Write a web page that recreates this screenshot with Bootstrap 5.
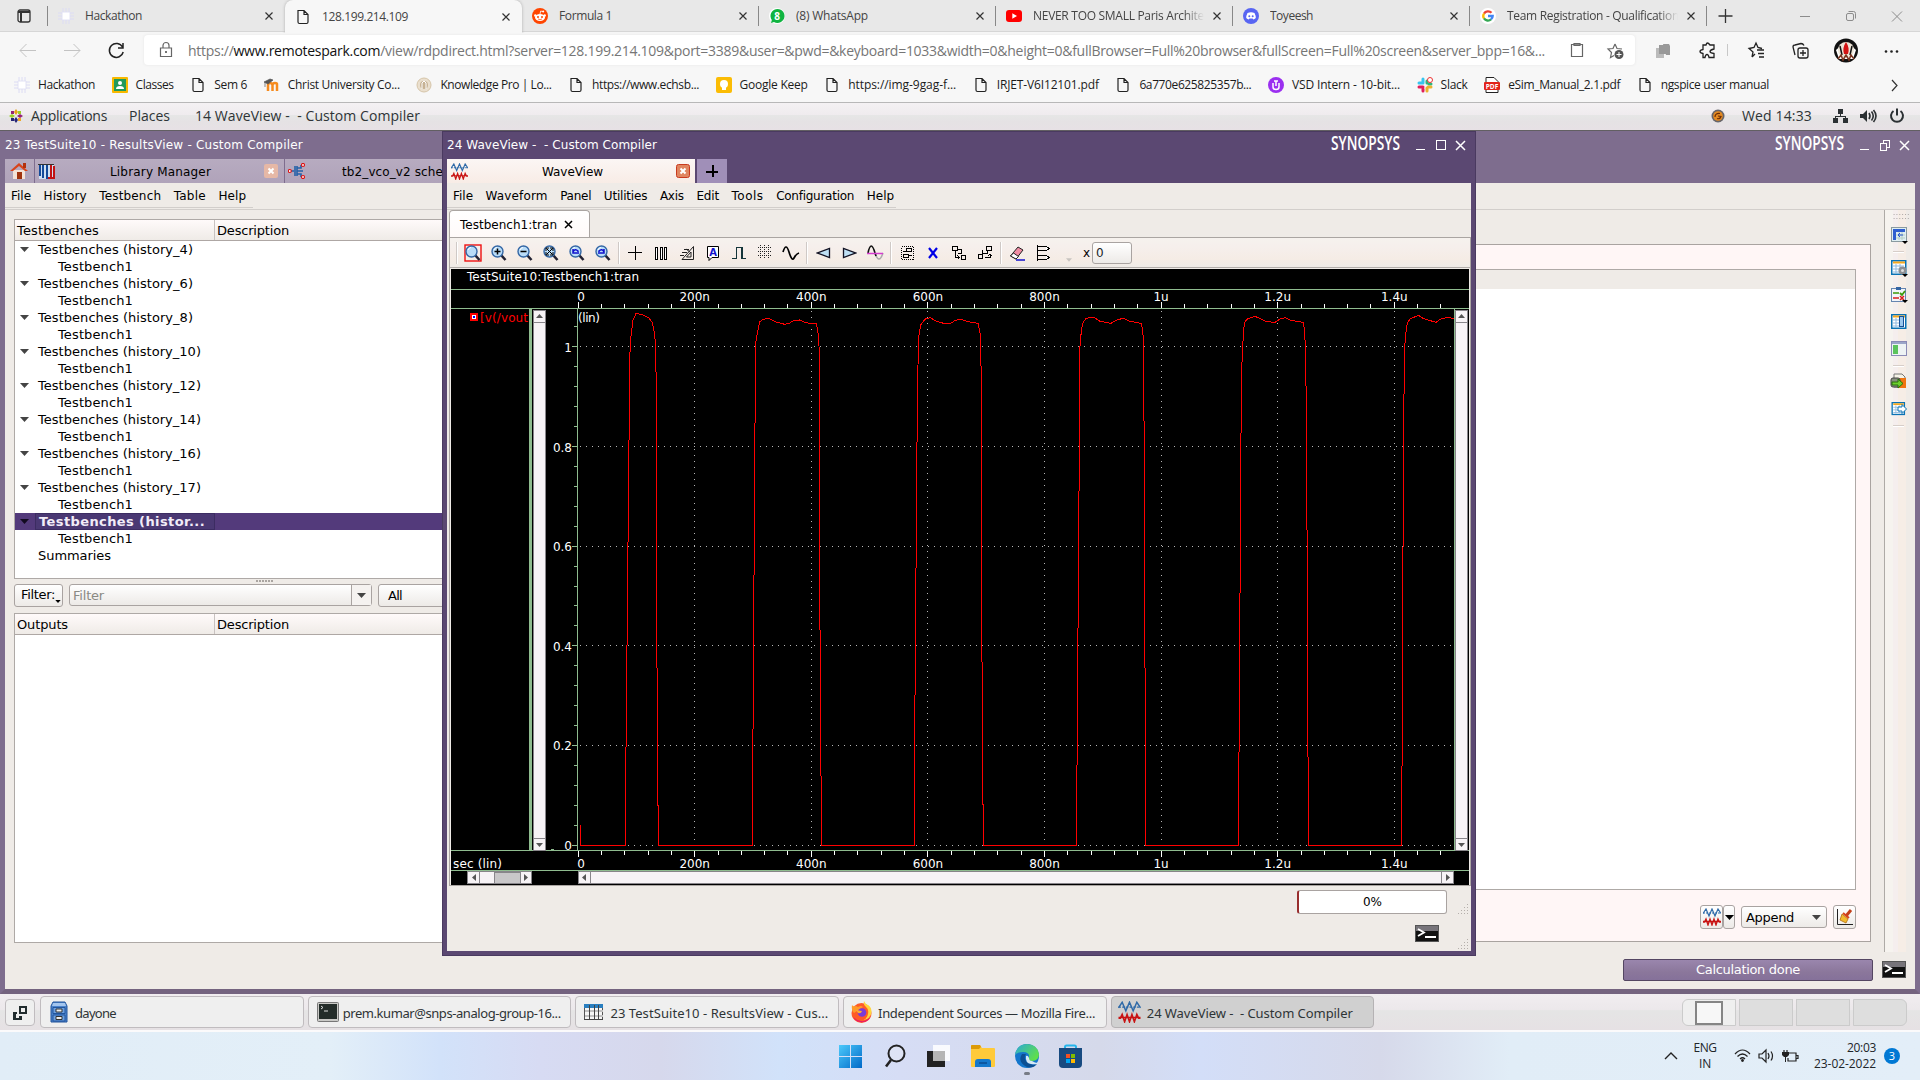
<!DOCTYPE html>
<html lang="en">
<head>
<meta charset="utf-8">
<title>128.199.214.109</title>
<link href="https://cdn.jsdelivr.net/npm/bootstrap@5.3.0/dist/css/bootstrap.min.css" rel="stylesheet">
<style>
html,body{width:1920px;height:1080px;overflow:hidden;margin:0}
body{font-family:"Open Sans","Noto Sans",sans-serif;font-size:12px;line-height:16px;color:#222;background:#efebe7}
svg{display:block;flex:none}
[data-w]{display:inline-block;white-space:pre;flex:none}
.crisp{shape-rendering:crispEdges}
/* browser */
.tabstrip{height:32px;background:#e8e8e8;border-bottom:1px solid #d6d6d6}
.btab{width:237px;height:32px;padding:0 10px 0;color:#444;position:relative;border-right:1px solid transparent;flex:none}
.btab .ttl{margin-left:11px;overflow:hidden;width:171px;height:16px}
.btab.sep::after{content:"";position:absolute;right:-1px;top:6px;height:20px;width:1px;background:#888}
.btab.on{background:#f7f7f7;border-radius:8px 8px 0 0;height:33px;margin-bottom:-1px;box-shadow:0 0 3px #aaa;clip-path:inset(-3px -3px 0 -3px)}
.fade-r{-webkit-mask-image:linear-gradient(90deg,#000 88%,transparent 100%)}
.toolbar-b{height:36px;background:#f7f7f7}
.omni{width:1491px;height:30px;background:#fff;border-radius:4px;box-shadow:0 0 3px #e4e4e4;font-size:14px;color:#767676}
.omni b{font-weight:400;color:#111}
.marks{height:35px;background:#f7f7f7;border-bottom:1px solid #b8b8b8;color:#1b1b1b;gap:16.6px;padding-left:14px;padding-bottom:1px}
/* remote desktop panels */
.gtop{height:28px;padding-bottom:2px;background:linear-gradient(#f4f1f3,#efebee 45%,#e6e6e6 46%,#e5e2e4 70%,#e7e1e5);border-bottom:1px solid #625f62;font-size:14px;color:#2e3436}
.desk{height:863px;position:relative}
.dj{font-family:"DejaVu Sans",sans-serif;font-size:12px;color:#000}
.backwin{height:863px;background:#efebe7;border:5px solid #7e6d8e;border-top:0;border-bottom:5px solid #74637f}
.backwin .cap{background:#7e6d8e;height:28px;color:#fff}
.tabs2{background:#7e6d8e;height:24px}
.tabs2>div{background:linear-gradient(#b7abc0,#b0a3ba);height:24px}
.tabs2 span{padding-top:2px}
.menus{height:27px;border-bottom:1px solid #d2cecb}
.menus>div{gap:12.600px;padding:5px 0 0 6px;border-bottom:1px solid #d2cecb;height:25px}
.hdr{height:21px;background:linear-gradient(#fffafa,#efebe7);border-bottom:1px solid #aea7a4;font-size:13px}
.hdr>div{height:20px;padding-left:2px;line-height:21px}
.hdr>div:first-child{width:200px;border-right:1px solid #c8c2c0}
.box{border:1px solid #aea9a6;background:#fff}
.row17{height:17px;font-size:13px;line-height:17px;display:flex;align-items:center}
.row17 .tri{margin:0 9px 0 5px;width:9px}
.selrow{background:#533a7b;color:#f2ecf8;font-weight:700}
.selrow .cell{background:#4a3873;outline:1px solid #3c2c62;outline-offset:-1px;width:180px;height:17px}
.qbtn{border:1px solid #a9a3a1;border-radius:3px;background:linear-gradient(#fff,#edeae7);height:23px}
.pinkp{background:#fff6f6;border:1px solid #a9a3a0;border-left:0}
.side{width:22px;border-left:1px solid #aeaaa6;background:linear-gradient(90deg,#f6f3ef 0 8px,#f5eeee 8px 13px,#f6ede6 13px)}
.calc{width:250px;height:22px;background:linear-gradient(#9a86ad,#8b779b 60%,#85719a);border:1px solid #544662;border-radius:2px;color:#fff;font-size:13px}
/* front window */
.frontwin{position:absolute;left:442px;top:0;width:1034px;height:825px;background:#efebe7;border:5px solid #5b4872;border-top:0;outline:1px solid #4a3a60;outline-offset:-1px}
.frontwin .cap{background:#5b4872;height:28px;color:#fff}
.frontwin .tabs2{background:#5b4872}
.wtab{width:248px;background:linear-gradient(#fbf6f4,#f8ece6)!important}
.ptab{width:30px;background:#a08fb8!important;margin-left:2px}
.dtab{width:141px;height:27px;background:linear-gradient(#fff,#fffaf9);border:1px solid #aaa5a2;border-bottom:0;border-radius:4px 4px 0 0;margin-left:2px}
.frame{margin-left:2px;width:1022px;border:1px solid #aaa5a2;height:649px}
.tools{height:30px;background:linear-gradient(#f6f2ee,#f6efec 30%,#f5ece5 75%,#efebe7);border-bottom:1px solid #b2adaa}
.tools>div{width:26px;flex:none;display:flex;justify-content:center;align-items:center}
.tools>i{width:6px;height:22px;flex:none;background:linear-gradient(90deg,transparent 2px,#cfc9c6 2px 3px,#fff 3px 4px,transparent 4px)}
.prog{width:150px;height:24px;background:#fff;border:1px solid #a9a3a1;border-left:2px solid #982e2e;border-radius:3px}
/* bottom panels */
.gbot{height:38px;background:linear-gradient(#f1edf0,#ece8eb 45%,#e5e5e5 46%,#e6e1e4);border-bottom:2px solid #fbfafb;color:#2e3436;font-family:"Noto Sans",sans-serif;padding-left:5px}
.task{width:263.5px;height:32px;border:1px solid #c0bcbf;border-radius:4px;background:#efefef;margin-right:4.2px;flex:none;padding-left:8px;gap:6px;font-size:13px}
.task span{padding-top:2px}
.task.on{background:#d0d0d0;border-color:#b5b2b4}
.ws{width:54px;height:27px;background:#dedede;border:1px solid #cbcbcb}
.wintask{height:48px;background:linear-gradient(90deg,#e1edf7 0,#e3eff8 330px,#d2e2fa 440px,#d7dbf3 540px,#d6d8ec 660px,#d1e2fa 780px,#d6ddf5 900px,#d5d9ea 1100px,#d3def8 1200px,#d6d9ea 1380px,#e1edf7 1510px,#e3eef8)}
.wintask>div{flex:none}
</style>
<script src="https://cdn.jsdelivr.net/npm/bootstrap@5.3.0/dist/js/bootstrap.bundle.min.js"></script>
</head>
<body class="d-flex flex-column">
<svg width="0" height="0" class="position-absolute">
 <defs>
 <symbol id="page" viewBox="0 0 16 16"><path d="M3 1.500h6L13 5.500v7.500q0 1.500-1.500 1.500h-7q-1.500 0-1.500-1.500zM9 1.500v4h4" fill="none" stroke="#222" stroke-width="1.200"/></symbol>
 <symbol id="xx" viewBox="0 0 10 10"><path d="M1.500 1.500l7 7M8.500 1.500l-7 7" stroke="#333" stroke-width="1.200"/></symbol>
 <symbol id="chip" viewBox="0 0 16 16"><path d="M4 4h8v8H4z" fill="#fff" stroke="#e2e2f4"/><path d="M5 0v4m3-4v4m3-4v4M5 12v4m3-4v4m3-4v4M0 5h4M0 8h4M0 11h4M12 5h4m-4 3h4m-4 3h4" stroke="#dcdcf4"/></symbol>
 <symbol id="tri" viewBox="0 0 9 5"><path d="M0 0h9L4.500 5z"/></symbol>
 <symbol id="waves" viewBox="0 0 18 18"><path d="M0 5.500L3 1l3 7 3-7 3 7 3-7 3 4.500" fill="none" stroke="#2f6aa8" stroke-width="1.200"/><path d="M0 5h18" stroke="#2f6aa8" stroke-dasharray="2 1"/><path d="M0 14h1.500l1.500-3 2 6 2-6 2 6 2-6 2 6 2-6 1.500 3H18M0 13.500h18" fill="none" stroke="#c81414" stroke-width="1.300"/></symbol>
 <symbol id="term" viewBox="0 0 24 17"><rect x=".5" y=".5" width="23" height="16" fill="#111" stroke="#555"/><path d="M1 1h22v5H1z" fill="#77747a"/><path d="M3 4l6 3.500-6 3.500M10 12h11" fill="none" stroke="#fff" stroke-width="1.800"/></symbol>
 <symbol id="mag" viewBox="0 0 16 16"><path d="M10 10l4.500 5" stroke="#223" stroke-width="2.600"/><circle cx="6.500" cy="6.500" r="5.500" fill="#b9dcf8" stroke="#3467a5" stroke-width="1.400"/><path d="M3 5q1-2.500 3-2.500" stroke="#fff" fill="none"/></symbol>
 <symbol id="grid" viewBox="0 0 16 16"><rect x=".75" y=".75" width="14" height="13.500" fill="#fff" stroke="#0a72b4" stroke-width="1.500"/><path d="M2 2.500h12" stroke="#f6a81c" stroke-width="2"/><path d="M2 6h11M2 9h11M2 12h11M5 4v9M9 4v9" stroke="#8fb9e0"/></symbol>
 <symbol id="dots" viewBox="0 0 11 11"><path d="M9 1h1M6 4h1m2 0h1M3 7h1m2 0h1m2 0h1M0 10h1m2 0h1m2 0h1m2 0h1" stroke="#b4afab"/></symbol>
 </defs>
</svg>

<!-- browser tabs -->
<div class="tabstrip d-flex flex-none">
 <div class="d-flex align-items-center btab sep" style="width:48px"><svg width="16" height="16" style="margin-left:6px"><rect x="2" y="2" width="12" height="12" rx="2" fill="none" stroke="#333" stroke-width="1.300"/><path d="M2 4h12M5 4v10" stroke="#333" stroke-width="2"/></svg></div>
 <div class="btab d-flex align-items-center"><svg width="16" height="16"><use href="#chip"/></svg><div class="ttl"><span data-w="57">Hackathon</span></div><svg width="10" height="10" class="ms-2"><use href="#xx"/></svg></div>
 <div class="btab on d-flex align-items-center"><svg width="16" height="16"><use href="#page"/></svg><div class="ttl"><span data-w="86">128.199.214.109</span></div><svg width="10" height="10" class="ms-2"><use href="#xx"/></svg></div>
 <div class="btab sep d-flex align-items-center"><svg width="16" height="16" viewBox="0 0 16 16"><circle cx="8" cy="8" r="8" fill="#ff4500"/><ellipse cx="8" cy="9.500" rx="5" ry="3.400" fill="#fff"/><circle cx="3.300" cy="7.500" r="1.200" fill="#fff"/><circle cx="12.700" cy="7.500" r="1.200" fill="#fff"/><circle cx="6" cy="9" r="1" fill="#ff4500"/><circle cx="10" cy="9" r="1" fill="#ff4500"/><path d="M6 11q2 1.200 4 0" stroke="#ff4500" fill="none" stroke-width=".7"/><path d="M8 6l.7-3 2.300.6" stroke="#fff" fill="none" stroke-width=".8"/><circle cx="11.200" cy="3.600" r="1" fill="#fff"/></svg><div class="ttl"><span data-w="53">Formula 1</span></div><svg width="10" height="10" class="ms-2"><use href="#xx"/></svg></div>
 <div class="btab sep d-flex align-items-center"><svg width="16" height="16" viewBox="0 0 16 16"><circle cx="8" cy="8" r="8" fill="#fff"/><path d="M2 15l.8-3A7 7 0 1 1 5 14z" fill="#10b441"/><text x="8" y="11.500" font-size="10" font-weight="700" fill="#fff" text-anchor="middle">8</text></svg><div class="ttl"><span data-w="72">(8) WhatsApp</span></div><svg width="10" height="10" class="ms-2"><use href="#xx"/></svg></div>
 <div class="btab sep d-flex align-items-center"><svg width="16" height="16" viewBox="0 0 16 16"><rect y="2" width="16" height="12" rx="3" fill="#f00"/><path d="M6.300 5.300L11 8l-4.700 2.700z" fill="#fff"/></svg><div class="ttl fade-r"><span data-w="171">NEVER TOO SMALL Paris Archite</span></div><svg width="10" height="10" class="ms-2"><use href="#xx"/></svg></div>
 <div class="btab sep d-flex align-items-center"><svg width="16" height="16" viewBox="0 0 16 16"><circle cx="8" cy="8" r="8" fill="#5865f2"/><path d="M4.500 5Q8 3.700 11.500 5q1.300 2.500 1.300 5-1.300 1.200-2.600 1.400l-.6-1H6.400l-.6 1Q4.500 11.200 3.200 10q0-2.500 1.300-5z" fill="#fff"/><circle cx="6.300" cy="8.300" r="1" fill="#5865f2"/><circle cx="9.700" cy="8.300" r="1" fill="#5865f2"/></svg><div class="ttl"><span data-w="43">Toyeesh</span></div><svg width="10" height="10" class="ms-2"><use href="#xx"/></svg></div>
 <div class="btab sep d-flex align-items-center"><svg width="16" height="16" viewBox="0 0 16 16"><circle cx="8" cy="8" r="8" fill="#fff"/><g fill="none" stroke-width="2.300"><path d="M11.500 4.800A4.700 4.700 0 0 0 4 5.600" stroke="#ea4335"/><path d="M4 5.500a4.700 4.700 0 0 0 0 5" stroke="#fbbc05"/><path d="M4 10.400a4.700 4.700 0 0 0 7 1" stroke="#34a853"/><path d="M11 11.400Q12.700 10 12.700 8H8" stroke="#4285f4"/></g></svg><div class="ttl fade-r"><span data-w="172">Team Registration - Qualification</span></div><svg width="10" height="10" class="ms-2"><use href="#xx"/></svg></div>
 <svg width="213" height="32"><path d="M11.500 16h14M18.500 9v14" stroke="#333" stroke-width="1.300"/><g fill="none" stroke="#8c8c8c"><path d="M93 16.500h10"/><rect x="139.500" y="13.500" width="7" height="7" rx="1.500"/><path d="M141.500 11.500h5q2 0 2 2v5"/><path d="M185 11.500l10 10M195 11.500l-10 10"/></g></svg>
</div>
<!-- address row -->
<div class="toolbar-b d-flex align-items-center">
 <svg width="144" height="36"><g fill="none"><path d="M36 18.500H20m6.500-6.500L20 18.500l6.500 6.500M64 18.500h16M73.500 12l6.500 6.500-6.500 6.500" stroke="#c3c3c3"/><path d="M122.500 15a7 7 0 1 0 .7 5M123 11v5h-5" stroke="#222" stroke-width="1.500"/></g></svg>
 <div class="omni d-flex align-items-center"><svg width="16" height="18" style="margin:0 14px 0 14px"><path d="M2.500 7h11v8.500h-11zM5 7V4.500a3 3 0 0 1 6 0V7" fill="none" stroke="#666" stroke-width="1.200"/><circle cx="8" cy="11" r="1" fill="#444"/></svg><span data-w="1357" style="margin-top:2px">https://<b>www.remotespark.com</b>/view/rdpdirect.html?server=128.199.214.109&amp;port=3389&amp;user=&amp;pwd=&amp;keyboard=1033&amp;width=0&amp;height=0&amp;fullBrowser=Full%20browser&amp;fullScreen=Full%20screen&amp;server_bpp=16&amp;...</span>
 <svg width="80" height="30"><g fill="none" stroke="#666" stroke-width="1.200"><path d="M26.500 9.500h11v12h-11z"/><path d="M29 8.500h6v2h-6z" fill="#888"/><path d="M70 9l2 4.500 5 .5M70 9l-2 4.500-5 .5 3.500 3.500-1 5 3.500-2"/></g><circle cx="74" cy="19.500" r="4.500" fill="#555"/><path d="M71.500 19.500h5M74 17v5" stroke="#fff"/></svg></div>
 <svg width="285" height="36"><path d="M21 16h8v10h-8z" fill="#bbb"/><path d="M24 13h7v9h-7zM28 12h6l1 2v9h-4" fill="#999"/><g fill="none" stroke="#222" stroke-width="1.300"><path d="M68 13h3q1-4 4 0h4v4q-4 1-4 2.500t4 2v4h-5q-.5-3-2-3t-2 3h-2v-4q-3-.5-3-2t3-2z"/><path d="M117 25l1-5-4-3.500 5-1 2-4.500 2 4.500 4 1M122 18h7m-6 3.500h6m-5 3.500h5M120 22l-3 3"/><rect x="163" y="16" width="10" height="10" rx="2"/><path d="M168 18v6m-3-3h6M160 23l-2-8q0-2 2-2l6-1.500q2 0 3 2"/></g><path d="M92.500 12v12" stroke="#c8c8c8"/><circle cx="211" cy="18.500" r="12" fill="#111"/><path d="M201 18q10-10 20 0l-3 9h-14z" fill="#fff"/><circle cx="211" cy="18" r="8" fill="#eee5d7"/><path d="M211 10q4 6 2 12h-4q-2-6 2-12z" fill="#d31313"/><path d="M205 14l2 9m10-9l-2 9" stroke="#111" stroke-width="1.500"/><path d="M203 27l3-4 2 5 3-5 3 5 2-5 3 4" stroke="#7b3520" stroke-width="1.500" fill="none"/><g fill="#222"><circle cx="251" cy="19.500" r="1.300"/><circle cx="256.500" cy="19.500" r="1.300"/><circle cx="262" cy="19.500" r="1.300"/></g></svg>
</div>
<!-- bookmarks -->
<div class="marks d-flex align-items-center">
 <div class="d-flex gap-2"><svg width="16" height="16"><use href="#chip"/></svg><span data-w="57">Hackathon</span></div>
 <div class="d-flex gap-2"><svg width="16" height="16"><rect width="16" height="16" rx="1" fill="#f7b900"/><rect x="2" y="2" width="12" height="12" fill="#229a5a"/><circle cx="8" cy="6" r="2" fill="#fff"/><path d="M4 12q0-3 4-3t4 3z" fill="#fff"/></svg><span data-w="38">Classes</span></div>
 <div class="d-flex gap-2"><svg width="16" height="16"><use href="#page"/></svg><span data-w="33">Sem 6</span></div>
 <div class="d-flex gap-2"><svg width="16" height="16"><path d="M3 14V8q0-2 2-2t2.500 2v6m0-6q0-2 2.500-2t2 2v6" stroke="#f68b1e" stroke-width="2.500" fill="none" transform="translate(1)"/><path d="M0 5l6-3 3 1-5 4zM1 5v5" fill="#555" stroke="#555" stroke-width=".7"/></svg><span data-w="112">Christ University Co...</span></div>
 <div class="d-flex gap-2"><svg width="16" height="16"><circle cx="8" cy="8" r="7" fill="#eadfce" stroke="#d6c5a9"/><circle cx="8" cy="8" r="4" fill="#c7b294"/><path d="M6 12V6l2-2 2 2v6" fill="none" stroke="#fff"/></svg><span data-w="111">Knowledge Pro | Lo...</span></div>
 <div class="d-flex gap-2"><svg width="16" height="16"><use href="#page"/></svg><span data-w="107">https://www.echsb...</span></div>
 <div class="d-flex gap-2"><svg width="16" height="16"><rect width="16" height="16" rx="2" fill="#fbbc04"/><circle cx="8" cy="7" r="4" fill="#fff"/><path d="M6 10h4v3H6z" fill="#fff"/></svg><span data-w="68">Google Keep</span></div>
 <div class="d-flex gap-2"><svg width="16" height="16"><use href="#page"/></svg><span data-w="108">https://img-9gag-f...</span></div>
 <div class="d-flex gap-2"><svg width="16" height="16"><use href="#page"/></svg><span data-w="102">IRJET-V6I12101.pdf</span></div>
 <div class="d-flex gap-2"><svg width="16" height="16"><use href="#page"/></svg><span data-w="112">6a770e625825357b...</span></div>
 <div class="d-flex gap-2"><svg width="16" height="16"><circle cx="8" cy="8" r="8" fill="#9b30f0"/><path d="M5 6v4q0 2.500 3 2.500t3-2.500V6M8 4v5M6 4h4" fill="none" stroke="#fff" stroke-width="1.500"/></svg><span data-w="108">VSD Intern - 10-bit...</span></div>
 <div class="d-flex gap-2"><svg width="16" height="16"><g stroke-width="3" stroke-linecap="round"><path d="M6 2v4M2 6h3" stroke="#36c5f0"/><path d="M10 6V4m2 3h2" stroke="#2eb67d"/><path d="M10 14v-3m1-1h3" stroke="#ecb22e"/><path d="M6 14v-2M2 10h4" stroke="#e01e5a"/></g><circle cx="13" cy="3" r="2.500" fill="#fff" stroke="#e33"/></svg><span data-w="27">Slack</span></div>
 <div class="d-flex gap-2"><svg width="16" height="16"><path d="M2 .5h8l4 4v11H2z" fill="#fff" stroke="#222"/><rect y="5" width="16" height="8" rx="1" fill="#e2231a"/><text x="8" y="11.500" font-size="6.500" font-weight="700" fill="#fff" text-anchor="middle">PDF</text></svg><span data-w="112">eSim_Manual_2.1.pdf</span></div>
 <div class="d-flex gap-2"><svg width="16" height="16"><use href="#page"/></svg><span data-w="108">ngspice user manual</span></div>
 <svg width="10" height="16" style="margin-left:105px"><path d="M2 3l5 5.500L2 14" fill="none" stroke="#333" stroke-width="1.200"/></svg>
</div>

<!-- remote desktop top panel -->
<div class="gtop d-flex align-items-center">
 <svg width="14" height="14" viewBox="0 0 14 14" style="margin:0 8px 0 9px"><path d="M7 0l2 3-2 3-2-3z" fill="#e6a117"/><path d="M14 7l-3 2-3-2 3-2z" fill="#932279"/><path d="M7 14l-2-3 2-3 2 3z" fill="#262577"/><path d="M0 7l3-2 3 2-3 2z" fill="#9ccd2a"/><path d="M2 2h3v3H2z" fill="#932279"/><path d="M9 2h3v3H9z" fill="#9ccd2a"/><path d="M2 9h3v3H2z" fill="#262577"/><path d="M9 9h3v3H9z" fill="#efa724"/></svg>
 <span data-w="76">Applications</span><span data-w="41" style="margin-left:22px">Places</span><span data-w="225" style="margin-left:25px">14 WaveView -  - Custom Compiler</span>
 <svg width="14" height="14" class="ms-auto" viewBox="0 0 14 14"><circle cx="7" cy="7" r="6.500" fill="#66656a"/><circle cx="7" cy="7" r="4.800" fill="#e58a20"/><path d="M4 8q0-4 5-3.500M6 9.500q3 1 4-2L7 7" stroke="#6b2c05" stroke-width="1.200" fill="none"/></svg>
 <span data-w="70" style="margin:0 20px 0 17px">Wed 14:33</span>
 <svg width="78" height="18" style="margin-right:10px"><g fill="#2b3033"><path d="M6 2h5v5H6zM1 11h5v5H1zM11 11h5v5h-5z"/><path d="M8 7h1v2h5v2h-1v-1H4v1H3V9h5z"/><path d="M28 7h3l4-4v12l-4-4h-3z"/></g><g fill="none" stroke="#2b3033" stroke-width="1.600"><path d="M37 6q2 3 0 6M39.500 4.500q3.500 4.500 0 9M41.500 3q5 6 0 12"/><path d="M61.500 4a6 6 0 1 0 7 0M65 1.500v7" stroke-width="2"/></g></svg>
</div>

<div class="desk dj">
 <!-- results window -->
 <div class="backwin d-flex flex-column">
  <div class="cap d-flex"><span data-w="298" style="margin-top:6px">23 TestSuite10 - ResultsView - Custom Compiler</span>
   <svg width="146" height="28" class="ms-auto"><text x="6" y="19" font-family="Open Sans" font-weight="600" font-size="19.500" fill="#fff" textLength="69" lengthAdjust="spacingAndGlyphs">SYNOPSYS</text><g fill="none" stroke="#fff" stroke-width="1.300" class="crisp"><path d="M91 18.500h9M111.500 12.500h6v7h-6zM114.500 12v-2.500h6v7H118"/></g><path d="M131 10l9 9M140 10l-9 9" stroke="#fff" stroke-width="1.500"/></svg></div>
  <div class="tabs2 d-flex">
   <div style="width:29px;margin-right:1px"><svg width="18" height="18" style="margin:3px 0 0 5px"><path d="M3 8h12v9H3z" fill="#f4e3d7"/><path d="M9 1L0 9h3l6-5 6 5h3z" fill="#d8431a"/><path d="M13 1h3v5h-3z" fill="#b4310d"/><path d="M7 10h5v7H7z" fill="#a0330e"/></svg></div>
   <div class="d-flex align-items-center" style="width:249px;margin-right:1px"><svg width="18" height="16" class="crisp" style="margin-left:3px"><path d="M1 1h15v15H1z" fill="#cfe0f2"/><path d="M1.500 1v12M4.500 1v14M8.500 2v14" stroke="#134a9a" stroke-width="2"/><path d="M12.500 2v14M16 3v13M10 15h7" stroke="#c21313" stroke-width="2"/><path d="M0 1.500h16" stroke="#333"/></svg><span data-w="101" style="margin-left:54px">Library Manager</span><svg width="14" height="14" style="margin-left:53px"><rect width="14" height="14" rx="2" fill="#e6b8a6"/><path d="M4.500 4.500l5 5m0-5l-5 5" stroke="#fff" stroke-width="2"/></svg></div>
   <div class="d-flex align-items-center flex-grow-0" style="width:300px"><svg width="18" height="16" style="margin-left:3px"><path d="M3 8h3M7 3v10M9 3v10M9 5h4V2M9 11h4v3M9 8h6" fill="none" stroke="#2461a8" stroke-width="1.600"/><g fill="#fff" stroke="#d11" stroke-width="1.200"><circle cx="1.800" cy="8" r="1.500"/><circle cx="15" cy="2" r="1.500"/><circle cx="15" cy="14" r="1.500"/></g></svg><span data-w="101" style="margin-left:36px">tb2_vco_v2 sche</span></div>
  </div>
  <div class="menus d-flex"><div class="d-flex" style="width:248px"><span data-w="20">File</span><span data-w="43">History</span><span data-w="62">Testbench</span><span data-w="32">Table</span><span data-w="28">Help</span></div></div>
  <div class="d-flex flex-grow-1" style="min-height:0">
   <div class="d-flex flex-column flex-grow-1">
    <div class="d-flex" style="height:732px">
     <div style="width:440px;padding:9px 0 0 9px" class="flex-shrink-0">
      <div class="box" style="height:360px">
       <div class="hdr d-flex"><div><span data-w="82">Testbenches</span></div><div><span data-w="72">Description</span></div></div>
       <div class="row17"><svg class="tri" height="5" fill="#444"><use href="#tri"/></svg><span data-w="155">Testbenches (history_4)</span></div>
       <div class="row17" style="padding-left:43px"><span data-w="75">Testbench1</span></div>
       <div class="row17"><svg class="tri" height="5" fill="#444"><use href="#tri"/></svg><span data-w="155">Testbenches (history_6)</span></div>
       <div class="row17" style="padding-left:43px"><span data-w="75">Testbench1</span></div>
       <div class="row17"><svg class="tri" height="5" fill="#444"><use href="#tri"/></svg><span data-w="155">Testbenches (history_8)</span></div>
       <div class="row17" style="padding-left:43px"><span data-w="75">Testbench1</span></div>
       <div class="row17"><svg class="tri" height="5" fill="#444"><use href="#tri"/></svg><span data-w="163">Testbenches (history_10)</span></div>
       <div class="row17" style="padding-left:43px"><span data-w="75">Testbench1</span></div>
       <div class="row17"><svg class="tri" height="5" fill="#444"><use href="#tri"/></svg><span data-w="163">Testbenches (history_12)</span></div>
       <div class="row17" style="padding-left:43px"><span data-w="75">Testbench1</span></div>
       <div class="row17"><svg class="tri" height="5" fill="#444"><use href="#tri"/></svg><span data-w="163">Testbenches (history_14)</span></div>
       <div class="row17" style="padding-left:43px"><span data-w="75">Testbench1</span></div>
       <div class="row17"><svg class="tri" height="5" fill="#444"><use href="#tri"/></svg><span data-w="163">Testbenches (history_16)</span></div>
       <div class="row17" style="padding-left:43px"><span data-w="75">Testbench1</span></div>
       <div class="row17"><svg class="tri" height="5" fill="#444"><use href="#tri"/></svg><span data-w="163">Testbenches (history_17)</span></div>
       <div class="row17" style="padding-left:43px"><span data-w="75">Testbench1</span></div>
       <div class="row17 selrow"><svg class="tri me-0" height="5" fill="#120a20"><use href="#tri"/></svg><div class="cell" style="margin-left:6px;padding-left:4px"><span data-w="166">Testbenches (histor...</span></div></div>
       <div class="row17" style="padding-left:43px"><span data-w="75">Testbench1</span></div>
       <div class="row17" style="padding-left:23px"><span data-w="73">Summaries</span></div>
      </div>
      <svg width="20" height="4" style="margin-left:242px" class="crisp"><path d="M0 1.500h18" stroke="#aaa5a1" stroke-width="2" stroke-dasharray="2 1"/></svg>
      <div class="d-flex align-items-center" style="font-size:13px;height:24px">
       <div class="qbtn d-flex align-items-center" style="width:49px;padding-left:6px"><span data-w="34">Filter:</span><svg width="6" height="3" style="margin-top:13px"><use href="#tri"/></svg></div>
       <div class="qbtn d-flex align-items-center bg-white" style="width:303px;height:22px;margin:0 6px;padding-left:3px;color:#8a8a84"><span data-w="31" style="padding-top:1px">Filter</span><div class="ms-auto d-flex align-items-center justify-content-center border-start" style="width:20px;height:20px;background:#f5f2f0;border-color:#a9a3a1!important"><svg width="9" height="5" fill="#444"><use href="#tri"/></svg></div></div>
       <div class="qbtn flex-grow-1" style="padding:3px 0 0 9px"><span data-w="14">All</span></div>
      </div>
      <div class="box" style="height:330px;margin-top:6px"><div class="hdr d-flex"><div><span data-w="51">Outputs</span></div><div><span data-w="72">Description</span></div></div></div>
     </div>
     <div class="pinkp flex-grow-1 d-flex flex-column align-items-end" style="margin:34px 0 0;height:698px;padding:24px 14px 0 0">
      <div class="box w-100" style="height:621px"><div style="height:19px;background:#efebe7"></div></div>
      <div class="d-flex align-items-center" style="margin-top:15px;height:24px">
       <div class="qbtn p-0" style="width:23px;height:24px"><svg width="18" height="18" style="margin:2px"><use href="#waves"/></svg></div>
       <div class="qbtn d-flex align-items-center justify-content-center" style="width:12px;height:24px"><svg width="9" height="5"><use href="#tri"/></svg></div>
       <div class="qbtn d-flex align-items-center" style="width:86px;height:22px;margin:0 6px;padding-left:4px;font-size:13px"><span data-w="48" style="padding-top:1px">Append</span><svg width="9" height="5" style="margin-left:18px" fill="#444"><use href="#tri"/></svg></div>
       <div class="qbtn" style="width:23px;height:24px"><svg width="21" height="22"><path d="M3.500 3v15.500H19" stroke="#222" fill="none"/><path d="M17 4l-5 6" stroke="#c2401b" stroke-width="3"/><path d="M8 8l6 5-2 4-6-3z" fill="#f2b92e" stroke="#b06c10" stroke-width=".8"/><path d="M9 7l6 5" stroke="#d8431a" stroke-width="2"/></svg></div>
      </div>
     </div>
     <div style="width:13px" class="flex-shrink-0"></div>
    </div>
    <div style="height:10px"></div>
    <div class="d-flex justify-content-end" style="padding:7px 11px 0 0"><div class="calc text-center"><span data-w="104" style="margin-top:2px">Calculation done</span></div></div>
   </div>
   <div style="width:31px" class="flex-shrink-0">
    <div class="side" style="height:742px">
     <svg width="25" height="742" viewBox="-1 1 25 742">
      <path d="M8 5.500h16M8 9.500h16" transform="scale(.95,1)" stroke="#a9a4a1" stroke-dasharray="1 2" class="crisp"/>
      <g transform="translate(5,18)"><rect x=".5" y=".5" width="15" height="14" fill="#dfeef2" stroke="#8a9aa0"/><path d="M2 2h12v3H2zM2 2h3v11H2z" fill="#2f5fd0"/><path d="M5 8h9M5 11h9M8 5v8M11 5v8" stroke="#b5cfc6"/><path d="M7 8h5M9 6l-2 2 2 2" stroke="#2554cf" fill="none"/><path d="M11 14h6l-3 3z"/></g>
      <g transform="translate(5,51)"><use href="#grid" width="16" height="16"/><circle cx="11.500" cy="10.500" r="4" fill="#8d9094"/><circle cx="11.500" cy="10.500" r="1.500" fill="#ddd"/><path d="M11 14h6l-3 3z"/></g>
      <g transform="translate(5,78)"><rect x=".5" y="1.500" width="14" height="13" fill="#f1f4fa" stroke="#6685b0"/><path d="M5 0h5v3H5z" fill="#3465a4"/><path d="M2 6h6" stroke="#3a9a08" stroke-width="1.500"/><path d="M9 6l2 2 3-4" fill="none" stroke="#3a9a08" stroke-width="1.800"/><path d="M2 11h6M9 9l4 4m0-4l-4 4" stroke="#d81c1c" stroke-width="1.500"/><path d="M11 13h6l-3 3z"/></g>
      <g transform="translate(5,105)"><use href="#grid" width="16" height="16"/><rect x="8.500" y="2.500" width="4" height="10" fill="#9cc8ee" stroke="#164f97"/></g>
      <g transform="translate(5,132)"><rect x=".5" y=".5" width="15" height="14" fill="#eef3f4" stroke="#8b8bb5"/><path d="M1 1h14v2H1z" fill="#9ba6c8"/><path d="M2 4h5v9H2z" fill="#5cc35c"/></g>
      <g transform="translate(5,165)"><path d="M3 0h8l3 3v10H3z" fill="#f5f2e6" stroke="#777"/><path d="M8 4h7v10H8z" fill="#ef7410"/><rect y="4" width="9" height="9" rx="2" fill="#87907e" stroke="#444"/><path d="M1 8h6V5l5 4.500L7 14v-3H1z" fill="#6dcf2e" stroke="#27700a"/></g>
      <g transform="translate(5,193)"><use href="#grid" width="15" height="14"/><path d="M7 5h4V2.500L15.500 7 11 11.500V9H7z" fill="#fff" stroke="#0a72b4"/></g>
      <path d="M7 42.500h11M7 156.500h11M7 216.500h11" stroke="#d7cec9"/><path d="M7 43.500h11M7 157.500h11M7 217.500h11" stroke="#fff"/>
     </svg>
    </div>
    <svg width="24" height="17" style="margin:9px 0 0 -2px"><use href="#term"/></svg>
   </div>
  </div>
 </div>

 <!-- waveform window -->
 <div class="frontwin d-flex flex-column">
  <div class="cap d-flex"><span data-w="210" style="margin-top:6px">24 WaveView -  - Custom Compiler</span>
   <svg width="146" height="28" class="ms-auto"><text x="6" y="19" font-family="Open Sans" font-weight="600" font-size="19.500" fill="#fff" textLength="69" lengthAdjust="spacingAndGlyphs">SYNOPSYS</text><g fill="none" stroke="#fff" stroke-width="1.300" class="crisp"><path d="M91 18.500h9M111.500 9.500h9v9h-9z"/></g><path d="M131 10l9 9M140 10l-9 9" stroke="#fff" stroke-width="1.500"/></svg></div>
  <div class="tabs2 d-flex">
   <div class="wtab d-flex align-items-center"><svg width="17" height="17" style="margin-left:4px"><use href="#waves"/></svg><span data-w="61" style="margin-left:74px">WaveView</span><svg width="14" height="14" style="margin-left:73px"><rect x=".5" y=".5" width="13" height="13" rx="2" fill="#e08560" stroke="#c93a1e"/><path d="M4.500 4.500l5 5m0-5l-5 5" stroke="#fff" stroke-width="2"/></svg></div>
   <div class="ptab"><svg width="30" height="24" class="crisp"><path d="M9 12.500h12M15.500 6v12" stroke="#000" stroke-width="2"/></svg></div>
  </div>
  <div class="menus d-flex"><div class="d-flex" style="width:449px"><span data-w="20">File</span><span data-w="62">Waveform</span><span data-w="31">Panel</span><span data-w="43.500">Utilities</span><span data-w="24">Axis</span><span data-w="22.500">Edit</span><span data-w="32">Tools</span><span data-w="78">Configuration</span><span data-w="27.500">Help</span></div></div>
  <div class="dtab d-flex align-items-center"><span data-w="97" style="margin-left:10px;padding-top:1px">Testbench1:tran</span><svg width="9" height="9" style="margin-left:7px"><path d="M1 1l7 7M8 1L1 8" stroke="#000" stroke-width="1.500"/></svg></div>
  <div class="frame d-flex flex-column">
   <div class="tools d-flex align-items-center" style="padding-left:4px">
    <i></i>
    <div><svg width="18" height="18"><rect x="1" y="1" width="16" height="16" fill="none" stroke="#e11" stroke-width="1.400"/><use href="#mag" x="1" y="1" width="16" height="16"/></svg></div>
    <div><svg width="16" height="16"><use href="#mag"/><path d="M3.500 6.500h6M6.500 3.500v6" stroke="#000" stroke-width="1.500"/></svg></div>
    <div><svg width="16" height="16"><use href="#mag"/><path d="M3.500 6.500h6" stroke="#000" stroke-width="1.500"/></svg></div>
    <div><svg width="16" height="16"><use href="#mag"/><path d="M3.500 3.500l6 6m0-6l-6 6M3 6V3h3m1 0h3v3M3 7v3h3m1 0h3V7" stroke="#000" fill="none"/></svg></div>
    <div><svg width="16" height="16"><use href="#mag"/><path d="M4 4v4h4M4 7q2-4 5-1v3" stroke="#11c" stroke-width="1.500" fill="none"/></svg></div>
    <div><svg width="16" height="16"><use href="#mag"/><path d="M9 4v4H5M9 7Q7 3 4 6v3" stroke="#11c" stroke-width="1.500" fill="none"/></svg></div>
    <i></i>
    <div><svg width="16" height="16" class="crisp"><path d="M1 7.500h14M8.500 1v14" stroke="#000"/></svg></div>
    <div><svg width="14" height="14" class="crisp"><path d="M1.500 1v12h2V1zm4.500 0v12h2V1zm4.500 0v12h2V1z" fill="#fff" stroke="#000"/></svg></div>
    <div><svg width="16" height="16"><path d="M3 14.500h11.500V1.500L3 14.500M7.500 12h4.500V7zM1 10.500h4M3 7.500h5M5 4.500h5M7 4l4 3" fill="none" stroke="#222"/></svg></div>
    <div><svg width="14" height="16"><path d="M1.500 1.500h11v11H6l-3 3v-3H1.500z" fill="#fff" stroke="#000"/><text x="7" y="10.500" font-size="10" font-weight="700" font-family="DejaVu Sans" fill="#11c" text-anchor="middle">A</text></svg></div>
    <div><svg width="16" height="16" class="crisp"><path d="M1 13.500h4.500v-12M5.500 2.500h6M11 1.500v12H15" fill="none" stroke="#15353a" stroke-width="1.600"/></svg></div>
    <div><svg width="15" height="15" class="crisp"><path d="M0 2.500h14M0 6.500h14M0 10.500h14M2.500 0v14M6.500 0v14M10.500 0v14" stroke="#222" stroke-dasharray="1 1"/></svg></div>
    <div><svg width="18" height="16"><path d="M1 7q3-10 6 0t5 6 5-5" fill="none" stroke="#000" stroke-width="1.700"/></svg></div>
    <i></i>
    <div><svg width="15" height="12"><path d="M13.500 1.500v9L1.500 6z" fill="#bfe0f4" stroke="#112" stroke-width="1.300"/></svg></div>
    <div><svg width="15" height="12"><path d="M1.500 1.500v9l12-4.500z" fill="#bfe0f4" stroke="#112" stroke-width="1.300"/></svg></div>
    <div><svg width="17" height="16"><path d="M8 8q4 12 8 0" fill="none" stroke="#aaa" stroke-width="1.500"/><path d="M1 8q3-14 7 0l1 3" fill="none" stroke="#111" stroke-width="1.600"/><path d="M0 8.500h16" stroke="#d63cd0" stroke-width="1.500"/></svg></div>
    <i></i>
    <div><svg width="15" height="16" class="crisp"><path d="M1.500 1.500h12v13h-12z" fill="none" stroke="#000" stroke-dasharray="1 1"/><path d="M6.500 3.500h5v3h-5zM3.500 9.500h5v3h-5zM3 6.500h3M9 10.500h3" fill="none" stroke="#000"/></svg></div>
    <div><svg width="12" height="12"><path d="M2 1l8 10M10 1L2 11" stroke="#0000e6" stroke-width="2.200"/></svg></div>
    <div><svg width="16" height="16" class="crisp"><path d="M1.500 1.500h5v4h-5zM6.500 4.500h4v4h-4M10.500 10.500h4v4h-4zM4.500 6v6.500h4M6.500 10.500l2 2-2 2" fill="none" stroke="#000"/></svg></div>
    <div><svg width="16" height="16" class="crisp"><path d="M9.500 1.500h5v4h-5zM5.500 4.500v4h5v-4M1.500 9.500h4v4h-4zM8 12.500h5V9M11 11l2-2 2 2" fill="none" stroke="#000"/></svg></div>
    <i></i>
    <div><svg width="17" height="16"><path d="M1.500 11L9 2l5 3-7 9z" fill="#f08da4" stroke="#222"/><path d="M1.500 11l3-3 5 3.500L7 14z" fill="#fff" stroke="#222"/><path d="M7 15h9" stroke="#11c" stroke-width="1.500"/></svg></div>
    <div><svg width="16" height="16" class="crisp"><path d="M2.500 0v16M3 1.500h8v4H3M3 10.500h8v4H3" fill="none" stroke="#000"/><path d="M11 1l3 2.500L11 6M11 10l3 2.500-3 2.500" fill="#fff" stroke="#000"/></svg></div>
    <div><svg width="6" height="4" style="margin-top:14px" fill="#c8c4c0"><use href="#tri"/></svg></div>
    <span data-w="7" style="margin-left:1px">x</span>
    <div class="qbtn bg-white text-dark" style="width:40px;height:22px;margin-left:2px;justify-content:flex-start!important;padding-left:3px">0</div>
   </div>
   <svg width="1018" height="616" class="crisp" style="margin:1px 0 0 1px" viewBox="451 269 1018 616" font-family="DejaVu Sans" font-size="12" fill="#fff">
    <rect x="451" y="269" width="1018" height="616" fill="#000"/>
    <text x="467" y="281" textLength="172">TestSuite10:Testbench1:tran</text>
    <g stroke="#8fbc8f"><path d="M451 289.500h1018M451 308.500h1018M451 850.500h1018M451 870.500h1018M577.500 309v541M1454.500 309v541"/><path d="M530.500 309v541" stroke-width="3"/>
     <path id="yt" d=""/><path d="M551 849.500h3"/></g>
    <path id="xt" d="" stroke="#fff"/>
    <path id="gr" d="" stroke="#b5b5b5" stroke-dasharray="1 5" fill="none"/>
    <g id="lab"></g>
    <text x="578" y="321.500" textLength="22">(lin)</text>
    <text x="453" y="868" textLength="49">sec (lin)</text>
    <rect x="470" y="313" width="8" height="8" fill="#f00"/><rect x="472" y="315" width="4" height="4" fill="#fff"/><rect x="473" y="316" width="2" height="2" fill="#00f"/>
    <text x="480" y="321.500" textLength="48" fill="#f00">[v(/vout</text>
    <path fill="none" stroke="#f00" stroke-width="1" d="M580.500 825V845.500H625.500V800L629.500 390V360L631 336 633 320 636 313.500 642 314.500 649 318 652.500 323 654.500 333 655.500 345V366L656.800 380V640L658.300 845.500H752.500V809L755.300 380V346L757.300 333 759.600 322 763 319.300 768.500 318.300 775 321.600 784.500 324.300 789 323.600 792.600 321 799.500 320 805 322.600 816.500 324 818 333 819 346 819.800 380V600L821.500 845.500H914.300V787L917.500 380 919 335 920.700 325 925.300 319 930 317.600 937 321.600 943.700 323.300H950.600L955 320.600 961 319 967 321.600 978 323.300 980.400 335 981.300 380V560L983.300 845.500H1076.500V835L1079.400 440V354L1080.600 338 1081.800 328 1083.500 321.500 1086 318.600 1091 317.300 1094.600 317.600 1100 321.300 1111 323.300 1116.700 320 1123.300 318.300 1130 321.300 1139.300 323 1141.500 324 1142.500 330 1143.400 338V396L1144.500 440 1145.400 845.500H1238.500V835L1241.400 373 1242.500 353 1243.500 330 1245 322 1247.300 319 1255 316.300 1260 318.600 1266.700 321.600 1275 322.300 1280 319 1285.600 317.600 1290 320 1303.500 322.500 1304.600 333 1305.600 350 1306.600 437 1308.400 845.500H1401.700V838L1403.500 440 1404.500 350 1405.600 335 1407.300 323 1410 319 1418.300 315.300 1423.300 318.600 1436 322.300 1440 319.300 1448.300 317.300 1454 319"/>
    <g fill="#f7f3f6" stroke="#88858a"><path d="M533.500 310.500h12v540h-12zM1455.500 310.500h12v540h-12zM467.500 871.500h64v12h-64zM578.500 871.500h875v12h-875z"/><path d="M533.500 322.500h12M533.500 838.500h12M1455.500 322.500h12M1455.500 838.500h12M479.500 872v12M520.500 872v12M590.500 872v12M1441.500 872v12"/><path d="M494.500 872.500h26v11h-26z" fill="#c9c7c9"/></g>
    <g fill="#555" shape-rendering="auto"><path d="M536 318h7l-3.500-4zM536 843h7l-3.500 4zM1458 318h7l-3.500-4zM1458 843h7l-3.500 4zM476 874v7l-4-3.500zM524 874v7l4-3.500zM586 874v7l-4-3.500zM1446 874v7l4-3.500z"/></g>
   </svg>
  </div>
  <div class="d-flex justify-content-end" style="margin-top:4px"><div class="prog text-center"><span data-w="19" style="margin-top:3px">0%</span></div><svg width="11" height="11" class="crisp" style="margin:13px 2px 0 11px"><use href="#dots"/></svg></div>
  <div class="d-flex justify-content-end mt-auto"><svg width="24" height="17" style="margin-bottom:9px"><use href="#term"/></svg><svg width="11" height="11" class="crisp" style="margin:13px 2px 1px 19px"><use href="#dots"/></svg></div>
 </div>
</div>

<!-- remote desktop window list -->
<div class="gbot d-flex align-items-center">
 <div class="task p-0" style="width:30px;height:27px;margin-right:5px"><svg width="28" height="25" class="crisp"><path d="M14 7h6v6h-6z" fill="none" stroke="#222d2f" stroke-width="2.500"/><path d="M8.500 12v7h6v-3M8 13h3" fill="none" stroke="#222d2f" stroke-width="2.500"/></svg></div>
 <div class="task d-flex align-items-center"><svg width="20" height="22"><path d="M4 1h12l2 4v16H2V5z" fill="#4a82cb" stroke="#22559c"/><path d="M4 2h12l1 3H3z" fill="#a3c5ee"/><path d="M4 6.500h12v6H4zM4 14h12v6H4z" fill="#6da0e0" stroke="#22559c"/><path d="M7 8h6v3H7zM7 15.500h6v3H7z" fill="#eee" stroke="#333"/></svg><span data-w="41">dayone</span></div>
 <div class="task d-flex align-items-center"><svg width="22" height="20"><rect x=".5" y=".5" width="21" height="19" rx="1" fill="#c9c9c6" stroke="#777"/><rect x="2" y="2" width="18" height="15" fill="#232c29"/><path d="M4 4l2 1.500L4 7M7 9h4" stroke="#ddd" fill="none"/></svg><span data-w="218" style="margin-left:-2px">prem.kumar@snps-analog-group-16...</span></div>
 <div class="task d-flex align-items-center"><svg width="20" height="16" class="crisp"><rect x=".5" y=".5" width="18" height="15" fill="#f5f5f5" stroke="#555"/><path d="M0 0h19v4H0z" fill="#2a7fc0"/><path d="M1 7h18M1 12h18" stroke="#c2c2c2" stroke-width="2"/><path d="M5.500 1v15M10.500 1v15M14.500 1v15M0 15.500h19" stroke="#444"/></svg><span data-w="218">23 TestSuite10 - ResultsView - Cus...</span></div>
 <div class="task d-flex align-items-center" style="padding-left:6px;gap:5px"><svg width="23" height="24" viewBox="0 0 23 24"><circle cx="11.500" cy="13" r="10" fill="#ff5a28"/><path d="M3 17a10 10 0 0 0 18-1q-5 6-10 5t-8-4z" fill="#e8186a"/><path d="M14 1q-1 4 2 6t2 7-5 6q8-1 8.500-8 0-5-3.500-7-3-1-4-4z" fill="#ffd53c"/><path d="M2 5q1 2 4 1l2 1q3-2 5 0L10 9l-6 4q-3-3-2-8z" fill="#ff9a2a"/><circle cx="12" cy="12.500" r="4.300" fill="#7a3bd8"/><path d="M6 10l6 1q-1 3-4 2z" fill="#ffab30"/></svg><span data-w="217">Independent Sources — Mozilla Fire...</span></div>
 <div class="task on d-flex align-items-center" style="padding-left:6px;gap:6px"><svg width="23" height="22"><use href="#waves" width="23" height="22"/></svg><span data-w="206">24 WaveView -  - Custom Compiler</span></div>
 <div class="d-flex ms-auto" style="gap:3px;margin-right:13px"><div class="ws rounded-start" style="background:#efefef"><svg width="52" height="25" class="crisp"><rect x="13" y="2" width="26" height="22" fill="#f7f7f7" stroke="#858585" stroke-width="2"/></svg></div><div class="ws"></div><div class="ws"></div><div class="ws rounded-end"></div></div>
</div>

<!-- host taskbar -->
<div class="wintask d-flex align-items-center text-dark">
 <div style="width:838px"></div>
 <svg width="248" height="48" viewBox="838 1032 248 48">
  <defs><linearGradient id="wg" x2="1" y2="1"><stop stop-color="#4cc9fb"/><stop offset="1" stop-color="#0069c8"/></linearGradient><linearGradient id="eg" x2="1" y2=".6"><stop stop-color="#2aa8d8"/><stop offset="1" stop-color="#60e04a"/></linearGradient></defs>
  <path d="M839 1045h11v11h-11zM851 1045h11v11h-11zM839 1057h11v11h-11zM851 1057h11v11h-11z" fill="url(#wg)"/>
  <circle cx="896.500" cy="1053.500" r="8" fill="#e6eaf4" fill-opacity=".5" stroke="#222" stroke-width="2"/><path d="M891 1060l-5 6.500" stroke="#222" stroke-width="2.600"/>
  <path d="M927 1051h18v16h-18z" fill="#222"/><path d="M933 1045h17v16h-17z" fill="#fff" fill-opacity=".85"/><path d="M933 1051h12v10h-12z" fill="#b5b5b5"/>
  <path d="M971 1046q0-1 1-1h8l2 3h12q1 0 1 1v17q0 1-1 1h-22q-1 0-1-1z" fill="#ffca3a"/><path d="M971 1049v-3q0-1 1-1h8l1 2-2 2z" fill="#dc9a08"/><path d="M975 1067v-5q0-3 3-3h10q3 0 3 3v5z" fill="#1478cc"/><path d="M979 1063h8" stroke="#0a4d92" stroke-width="1.500"/>
  <circle cx="1027" cy="1056" r="12" fill="#1376cc"/><path d="M1015 1055q2-11 12-11t12 10q0 7-7 7-4 0-3-3 1-6-6-6-6 0-8 3z" fill="url(#eg)"/><path d="M1022 1054q-5 8 5 13 6 2 10-3-6 2-10-2-4-4-1-8z" fill="#0c4f93"/><path d="M1026 1056q-1 7 5 8t7-1q-3 0-6-2-3 0-3-3-1-3-3-2z" fill="#d5e8f6"/><rect x="1024" y="1072" width="6" height="3" rx="1.500" fill="#777c86"/>
  <path d="M1065 1050v-3q0-1.500 1.500-1.500h8q1.500 0 1.500 1.500v3" fill="none" stroke="#25b5ec" stroke-width="2"/><path d="M1059 1048h23v16q0 4-4 4h-15q-4 0-4-4z" fill="#174a80"/><path d="M1066 1054h4v4h-4z" fill="#f25022"/><path d="M1071 1054h4v4h-4z" fill="#7fba00"/><path d="M1066 1059h4v4h-4z" fill="#00a4ef"/><path d="M1071 1059h4v4h-4z" fill="#ffb900"/>
 </svg>
 <svg width="16" height="10" style="margin-left:577px"><path d="M2 8l6-6 6 6" fill="none" stroke="#222" stroke-width="1.400"/></svg>
 <div class="text-center" style="width:34px;margin-left:9px"><span data-w="23">ENG</span><br><span data-w="12">IN</span></div>
 <svg width="70" height="18" style="margin-left:12px"><g fill="none" stroke="#222" stroke-width="1.200"><path d="M1 7q7.500-8 15 0M3.500 9.500q5-5 10 0M6 12q2.500-2.500 5 0"/><path d="M25 7h3l4-4v12l-4-4h-3zM34 6q2 3 0 6M37 4.500q3 4.500 0 9"/><path d="M53 6h9v8h-8v-3M62.500 8.500h1.500v3h-1.500M50 3v3m3-3v3"/></g><circle cx="8.500" cy="13.500" r="1.400" fill="#222"/><path d="M48 5h7v3l-2 2h-3l-2-2z" fill="#222"/><path d="M51.500 9v6" stroke="#222"/></svg>
 <div class="text-end" style="width:62px;margin-left:10px"><span data-w="29">20:03</span><br><span data-w="62">23-02-2022</span></div>
 <div class="rounded-circle text-white text-center" style="width:16px;height:16px;margin-left:8px;background:#0078d4;font-size:11px">3</div>
</div>

<script>
// Tune letter spacing so each label fills its designed width.
document.querySelectorAll('[data-w]').forEach(e => {
  const w = e.getBoundingClientRect().width;
  e.style.letterSpacing = ((+e.dataset.w - w) / e.textContent.length).toFixed(3) + 'px';
});
// Axis ticks, grid and labels of the plot.
const X0 = 578.1, DX = 116.6, Y0 = 845.5, DY = 99.8;
const xn = ['0', '200n', '400n', '600n', '800n', '1u', '1.2u', '1.4u'];
const yn = ['0', '0.2', '0.4', '0.6', '0.8', '1'];
let xt = '', yt = '', gr = '', lab = '';
for (let i = 0; i <= 37; i++) {
  const x = Math.floor(X0 + i * DX / 5) + .5, big = i % 5 === 0;
  xt += `M${x} ${big ? 302 : 304}V308M${x} 851V${big ? 857 : 855}`;
  if (big && i) gr += `M${x} 311V845`;
}
for (let i = 0; i <= 26; i++) {
  const y = Math.floor(Y0 - i * DY / 5) + .5;
  yt += `M${i % 5 ? 574 : 572} ${y}H577`;
  if (i % 5 === 0) gr += `M580 ${y}H1454`;
}
xn.forEach((t, i) => { const x = i ? X0 + i * DX : 581; for (const y of [301, 868]) lab += `<text x="${x}" y="${y}" text-anchor="middle">${t}</text>`; });
yn.forEach((t, i) => { lab += `<text x="572" y="${(849.500 - i * DY + i * .3).toFixed(1)}" text-anchor="end">${t}</text>`; });
document.getElementById('xt').setAttribute('d', xt);
document.getElementById('yt').setAttribute('d', yt);
document.getElementById('gr').setAttribute('d', gr);
document.getElementById('lab').innerHTML = lab;
</script>
</body>
</html>
